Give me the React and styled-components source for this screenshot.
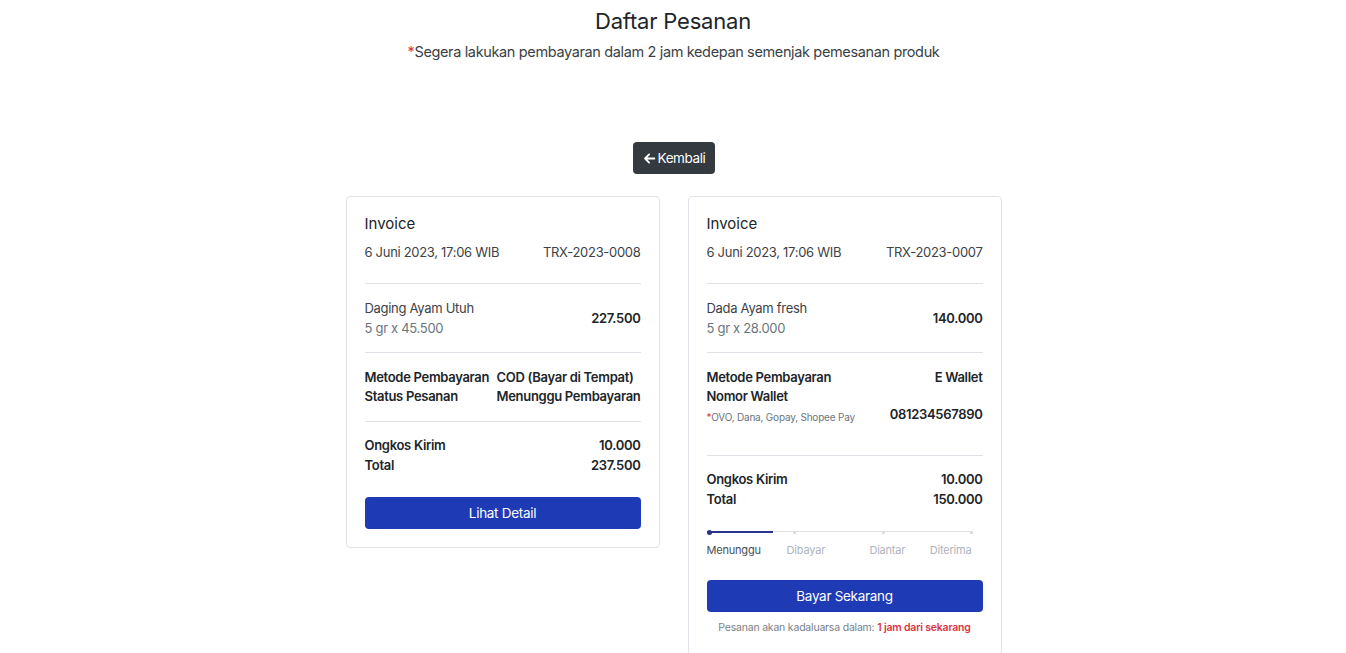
import React from 'react';
import styled, { createGlobalStyle } from 'styled-components';

const GlobalStyle = createGlobalStyle`
  body {
    margin: 0;
    background: #ffffff;
    font-family: Inter, "Noto Sans", sans-serif;
    color: #212529;
  }
  * { box-sizing: border-box; }
`;

const Page = styled.main`
  display: flex;
  flex-direction: column;
  align-items: center;
  padding-top: 6px;
`;

const Title = styled.h1`
  margin: 0;
  font-size: 22px;
  font-weight: 400;
  line-height: 30px;
  letter-spacing: -0.2px;
`;

const Subtitle = styled.p`
  margin: 6px 0 0;
  padding-left: 1px;
  font-size: 14.5px;
  line-height: 20px;
  color: #3a3f44;
  letter-spacing: -0.36px;

  span {
    color: #dc3545;
  }
`;

const BackButton = styled.button`
  margin: 80px 0 0 2px;
  display: flex;
  align-items: center;
  gap: 2px;
  height: 32px;
  padding: 0 10px 0 10px;
  border: none;
  border-radius: 4px;
  background: #343a40;
  color: #ffffff;
  font-family: inherit;
  font-size: 13.5px;
  letter-spacing: -0.4px;
`;

const Cards = styled.div`
  margin: 22px 0 0 1px;
  display: flex;
  align-items: flex-start;
  gap: 28px;
`;

const Card = styled.section`
  width: 314px;
  border: 1px solid #dfe2e6;
  border-radius: 4px;
  padding: 16px 18px 18px;
`;

const CardTitle = styled.div`
  font-size: 15px;
  line-height: 22px;
`;

const Row = styled.div`
  display: flex;
  justify-content: space-between;
  align-items: center;
  font-size: 13px;
  line-height: 20px;
  font-weight: ${(p) => (p.$bold ? 600 : 400)};
  color: #212529;
  letter-spacing: -0.3px;
`;

const DateRow = styled(Row)`
  margin-top: 7px;
  color: #3d4246;
`;

const Divider = styled.hr`
  margin: ${(p) => p.$top ?? 14}px 0 ${(p) => p.$bottom ?? 14}px;
  border: none;
  border-top: 1px solid #dee2e6;
`;

const Item = styled.div`
  display: flex;
  flex-direction: column;
`;

const ItemName = styled.span`
  color: #3d4246;
`;

const ItemQty = styled.span`
  color: #6c757d;
`;

const Price = styled.span`
  font-weight: 600;
`;

const PayGrid = styled.div`
  display: grid;
  grid-template-columns: 1fr auto;
  font-size: 13px;
  line-height: 19px;
  font-weight: 600;
  letter-spacing: -0.3px;
`;

const Note = styled.div`
  margin-top: 4px;
  font-size: 10px;
  line-height: 14px;
  font-weight: 400;
  color: #6c757d;
  letter-spacing: -0.2px;

  span {
    color: #dc3545;
  }
`;

const Number = styled.div`
  align-self: end;
  text-align: right;
`;

const PrimaryButton = styled.button`
  display: block;
  width: 100%;
  height: 32px;
  margin-top: 22px;
  border: none;
  border-radius: 4px;
  background: #1e3ab5;
  color: #ffffff;
  font-family: inherit;
  font-size: 13.5px;
  letter-spacing: -0.3px;
`;

const Tracker = styled.div`
  margin: 21px 11px 0 0;
`;

const Track = styled.div`
  position: relative;
  height: 4px;

  &::before {
    content: '';
    position: absolute;
    left: 0;
    right: 0;
    top: 1px;
    height: 1px;
    background: #dee2e6;
  }
`;

const TrackFill = styled.div`
  position: absolute;
  left: 0;
  top: 1px;
  height: 2px;
  margin-top: -0.5px;
  background: #27338c;
`;

const Dot = styled.span`
  position: absolute;
  top: ${(p) => (p.$active ? 0 : 0.5)}px;
  width: ${(p) => (p.$active ? 5 : 3)}px;
  height: ${(p) => (p.$active ? 5 : 3)}px;
  margin-left: ${(p) => (p.$active ? 0 : -1.5)}px;
  margin-top: ${(p) => (p.$active ? -0.5 : 0)}px;
  border-radius: 50%;
  background: ${(p) => (p.$active ? '#27338c' : '#d4d8dc')};
`;

const Steps = styled.div`
  display: grid;
  grid-template-columns: repeat(4, 1fr);
  margin-top: 8px;
  font-size: 11px;
  line-height: 16px;
  letter-spacing: -0.2px;
`;

const Step = styled.span`
  text-align: ${(p) => p.$align};
  color: ${(p) => (p.$active ? '#495057' : '#adb5bd')};
`;

const Expiry = styled.p`
  margin: 8px 0 0;
  text-align: center;
  font-size: 10.5px;
  line-height: 16px;
  color: #7b8288;
  letter-spacing: -0.2px;

  strong {
    color: #dc3545;
    font-weight: 600;
  }
`;

const ArrowLeft = () => (
  <svg width="13" height="13" viewBox="0 0 16 16" fill="none">
    <path d="M14 8H2.5M7.5 3 2.5 8l5 5" stroke="#fff" strokeWidth="2.2" strokeLinecap="round" strokeLinejoin="round" />
  </svg>
);

const steps = [
  { label: 'Menunggu', align: 'left' },
  { label: 'Dibayar', align: 'center' },
  { label: 'Diantar', align: 'right' },
  { label: 'Diterima', align: 'right' },
];

const InvoiceHead = ({ trx }) => (
  <>
    <CardTitle>Invoice</CardTitle>
    <DateRow>
      <span>6 Juni 2023, 17:06 WIB</span>
      <span>{trx}</span>
    </DateRow>
    <Divider $top={21} />
  </>
);

const ItemRow = ({ name, qty, price }) => (
  <Row>
    <Item>
      <ItemName>{name}</ItemName>
      <ItemQty>{qty}</ItemQty>
    </Item>
    <Price>{price}</Price>
  </Row>
);

const Totals = ({ ongkir, total }) => (
  <>
    <Row $bold>
      <span>Ongkos Kirim</span>
      <span>{ongkir}</span>
    </Row>
    <Row $bold>
      <span>Total</span>
      <span>{total}</span>
    </Row>
  </>
);

export default function App() {
  const progress = 25;
  return (
    <Page>
      <GlobalStyle />
      <Title>Daftar Pesanan</Title>
      <Subtitle>
        <span>*</span>Segera lakukan pembayaran dalam 2 jam kedepan semenjak pemesanan produk
      </Subtitle>
      <BackButton>
        <ArrowLeft />
        Kembali
      </BackButton>

      <Cards>
        <Card>
          <InvoiceHead trx="TRX-2023-0008" />
          <ItemRow name="Daging Ayam Utuh" qty="5 gr x 45.500" price="227.500" />
          <Divider $bottom={15} />
          <PayGrid>
            <span>Metode Pembayaran</span>
            <span>COD (Bayar di Tempat)</span>
            <span>Status Pesanan</span>
            <span>Menunggu Pembayaran</span>
          </PayGrid>
          <Divider $top={15} $bottom={13} />
          <Totals ongkir="10.000" total="237.500" />
          <PrimaryButton>Lihat Detail</PrimaryButton>
        </Card>

        <Card>
          <InvoiceHead trx="TRX-2023-0007" />
          <ItemRow name="Dada Ayam fresh" qty="5 gr x 28.000" price="140.000" />
          <Divider $bottom={15} />
          <PayGrid>
            <span>Metode Pembayaran</span>
            <Number>E Wallet</Number>
            <div>
              <div>Nomor Wallet</div>
              <Note>
                <span>*</span>OVO, Dana, Gopay, Shopee Pay
              </Note>
            </div>
            <Number>081234567890</Number>
          </PayGrid>
          <Divider $top={31} $bottom={13} />
          <Totals ongkir="10.000" total="150.000" />
          <Tracker>
            <Track>
              <TrackFill style={{ width: `${progress}%` }} />
              <Dot $active style={{ left: 0 }} />
              <Dot style={{ left: '33.33%' }} />
              <Dot style={{ left: '66.66%' }} />
              <Dot style={{ left: '100%' }} />
            </Track>
            <Steps>
              {steps.map((s, i) => (
                <Step key={s.label} $align={s.align} $active={i === 0}>
                  {s.label}
                </Step>
              ))}
            </Steps>
          </Tracker>
          <PrimaryButton>Bayar Sekarang</PrimaryButton>
          <Expiry>
            Pesanan akan kadaluarsa dalam: <strong>1 jam dari sekarang</strong>
          </Expiry>
        </Card>
      </Cards>
    </Page>
  );
}
